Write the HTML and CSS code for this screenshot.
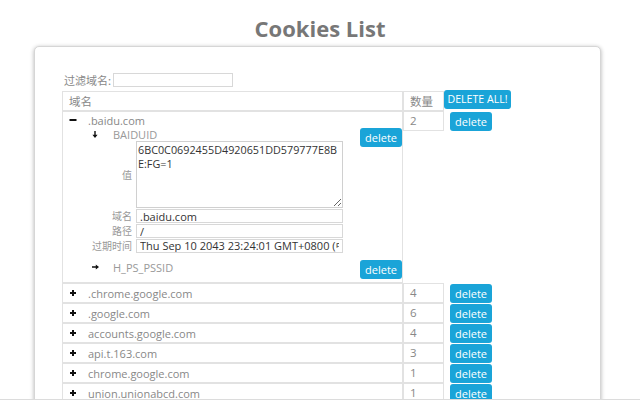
FILE: index.html
```html
<!DOCTYPE html>
<html>
<head>
<meta charset="utf-8">
<title>Cookies List</title>
<link rel="stylesheet" href="styles.css">
</head>
<body>
<h1 class="title">Cookies List</h1>
<div class="card">
  <div class="filter">
    <label class="filter-label">过滤域名:</label>
    <input class="filter-input" type="text">
  </div>

  <div class="row head">
    <div class="dom"><span class="head-text">域名</span></div>
    <div class="cnt">数量</div>
    <button class="btn btn-all">DELETE ALL!</button>
  </div>

  <div class="row">
    <div class="dom open">
      <div class="dom-line">
        <span class="ico"><svg width="8" height="8" viewBox="0 0 8 8"><rect x="0.5" y="3" width="7" height="2" fill="#111"/></svg></span>
        <span class="name">.baidu.com</span>
      </div>
      <div class="sub">
        <div class="item">
          <div class="item-main">
            <div class="item-title"><span class="arrow"><svg width="6" height="7" viewBox="0 0 6 7"><path d="M2.3 0h1.4v3.8H5.6L3 7 0.4 3.8h1.9z" fill="#111"/></svg></span><span>BAIDUID</span></div>
            <div class="detail">
              <label class="lbl">值</label>
              <textarea class="val-area">6BC0C0692455D4920651DD579777E8BE:FG=1</textarea>
              <label class="lbl">域名</label>
              <input class="val" type="text" value=".baidu.com">
              <label class="lbl">路径</label>
              <input class="val" type="text" value="/">
              <label class="lbl">过期时间</label>
              <input class="val" type="text" value="Thu Sep 10 2043 23:24:01 GMT+0800 (中国标准时间)">
            </div>
          </div>
          <button class="btn btn-sub">delete</button>
        </div>
        <div class="item item2">
          <div class="item-main">
            <div class="item-title"><span class="arrow"><svg width="7" height="6" viewBox="0 0 7 6"><path d="M0 2.3h3.8V0.4L7 3 3.8 5.6V3.7H0z" fill="#111"/></svg></span><span>H_PS_PSSID</span></div>
          </div>
          <button class="btn btn-sub">delete</button>
        </div>
      </div>
    </div>
    <div class="cnt">2</div>
    <button class="btn btn-row">delete</button>
  </div>

  <div class="row">
    <div class="dom"><div class="dom-line"><span class="ico"><svg width="8" height="8" viewBox="0 0 8 8"><path d="M3 1h2v2h2v2H5v2H3V5H1V3h2z" fill="#111"/></svg></span><span class="name">.chrome.google.com</span></div></div>
    <div class="cnt">4</div>
    <button class="btn btn-row">delete</button>
  </div>
  <div class="row">
    <div class="dom"><div class="dom-line"><span class="ico"><svg width="8" height="8" viewBox="0 0 8 8"><path d="M3 1h2v2h2v2H5v2H3V5H1V3h2z" fill="#111"/></svg></span><span class="name">.google.com</span></div></div>
    <div class="cnt">6</div>
    <button class="btn btn-row">delete</button>
  </div>
  <div class="row">
    <div class="dom"><div class="dom-line"><span class="ico"><svg width="8" height="8" viewBox="0 0 8 8"><path d="M3 1h2v2h2v2H5v2H3V5H1V3h2z" fill="#111"/></svg></span><span class="name">accounts.google.com</span></div></div>
    <div class="cnt">4</div>
    <button class="btn btn-row">delete</button>
  </div>
  <div class="row">
    <div class="dom"><div class="dom-line"><span class="ico"><svg width="8" height="8" viewBox="0 0 8 8"><path d="M3 1h2v2h2v2H5v2H3V5H1V3h2z" fill="#111"/></svg></span><span class="name">api.t.163.com</span></div></div>
    <div class="cnt">3</div>
    <button class="btn btn-row">delete</button>
  </div>
  <div class="row">
    <div class="dom"><div class="dom-line"><span class="ico"><svg width="8" height="8" viewBox="0 0 8 8"><path d="M3 1h2v2h2v2H5v2H3V5H1V3h2z" fill="#111"/></svg></span><span class="name">chrome.google.com</span></div></div>
    <div class="cnt">1</div>
    <button class="btn btn-row">delete</button>
  </div>
  <div class="row">
    <div class="dom"><div class="dom-line"><span class="ico"><svg width="8" height="8" viewBox="0 0 8 8"><path d="M3 1h2v2h2v2H5v2H3V5H1V3h2z" fill="#111"/></svg></span><span class="name">union.unionabcd.com</span></div></div>
    <div class="cnt">1</div>
    <button class="btn btn-row">delete</button>
  </div>
</div>
<div class="edge"></div>
</body>
</html>
```

FILE: styles.css
```css
html, body {
  margin: 0;
  padding: 0;
  height: 400px;
  overflow: hidden;
  background: #fff;
}
body {
  font-family: "Open Sans", "Noto Sans CJK SC", sans-serif;
  font-size: 11px;
  color: #888;
  position: relative;
}
.title {
  margin: 0;
  height: 46px;
  box-sizing: border-box;
  padding-top: 13px;
  line-height: 30px;
  text-align: center;
  font-size: 22px;
  font-weight: 700;
  color: #777;
}
.card {
  margin-left: 34px;
  width: 567px;
  height: 420px;
  box-sizing: border-box;
  border: 1px solid #d6d6d6;
  border-radius: 5px;
  box-shadow: 0 1px 4px rgba(0, 0, 0, 0.3);
  padding: 25px 0 0 27px;
  background: #fff;
}
.edge {
  position: absolute;
  left: 0;
  right: 0;
  bottom: 0;
  height: 1px;
  background: #dcdcdc;
}
.filter {
  display: flex;
  align-items: center;
  height: 16px;
  margin-bottom: 3px;
}
.filter-label {
  margin-left: 2px;
  font-size: 11px;
  color: #888;
  font-family: "Noto Sans CJK SC", sans-serif;
}
.filter-input {
  margin: 0 0 0 2px;
  width: 120px;
  height: 14px;
  box-sizing: border-box;
  border: 1px solid #d8d8d8;
  padding: 0 3px;
}
.row {
  display: flex;
  align-items: flex-start;
}
.dom {
  width: 341px;
  min-height: 20px;
  box-sizing: border-box;
  border: 1px solid #e2e2e2;
}
.head-text {
  display: block;
  padding-left: 6px;
  line-height: 18px;
  font-family: "Noto Sans CJK SC", sans-serif;
  font-size: 11.5px;
}
.cnt {
  width: 41px;
  height: 20px;
  box-sizing: border-box;
  border: 1px solid #e2e2e2;
  padding-left: 6px;
  line-height: 18px;
  font-size: 11.5px;
  color: #888;
}
.head .cnt {
  font-family: "Noto Sans CJK SC", sans-serif;
}
.btn {
  border: none;
  border-radius: 3px;
  background: #1aa4d8;
  color: #fff;
  font-family: "Open Sans", sans-serif;
  font-size: 11px;
  padding: 0;
  height: 19px;
  line-height: 19px;
}
.btn-all {
  width: 67px;
  margin-top: -1px;
  font-size: 10.6px;
}
.btn-row {
  width: 42px;
  margin: 1px 0 0 6px;
}
.btn-sub {
  width: 42px;
  flex: none;
}
.dom-line {
  display: flex;
  align-items: center;
  height: 18px;
}
.open .dom-line {
  height: 16px;
}
.open {
  padding-bottom: 3px;
}
.ico {
  width: 10px;
  margin-left: 5px;
  margin-right: 10px;
  display: flex;
  justify-content: center;
  align-items: center;
}
.name {
  font-size: 11px;
  color: #888;
}
.sub {
  padding-left: 27px;
}
.item {
  display: flex;
  justify-content: space-between;
  align-items: flex-start;
}
.item2 {
  margin-top: 7px;
}
.item-title {
  display: flex;
  align-items: center;
  height: 13px;
  color: #999;
  font-size: 11px;
}
.item2 .item-title {
  height: 14px;
}
.arrow {
  width: 10px;
  margin-right: 13px;
  display: flex;
  justify-content: center;
  align-items: center;
}
.detail {
  display: grid;
  grid-template-columns: 40px 207px;
  column-gap: 4px;
  row-gap: 1px;
  margin-left: 2px;
}
.lbl {
  text-align: right;
  align-self: center;
  font-family: "Noto Sans CJK SC", sans-serif;
  font-size: 10px;
  line-height: 12px;
  color: #999;
  white-space: nowrap;
}
.val-area {
  display: block;
  width: 207px;
  height: 67px;
  box-sizing: border-box;
  margin: 0;
  border: 1px solid #d0d0d0;
  padding: 1px;
  font-family: "Open Sans", sans-serif;
  font-size: 10.8px;
  line-height: 14px;
  color: #333;
  word-break: break-all;
  resize: vertical;
}
.val {
  display: block;
  width: 207px;
  height: 14px;
  box-sizing: border-box;
  margin: 0;
  border: 1px solid #d8d8d8;
  padding: 0 3px;
  font-family: "Open Sans", sans-serif;
  font-size: 11px;
  color: #333;
}
```
